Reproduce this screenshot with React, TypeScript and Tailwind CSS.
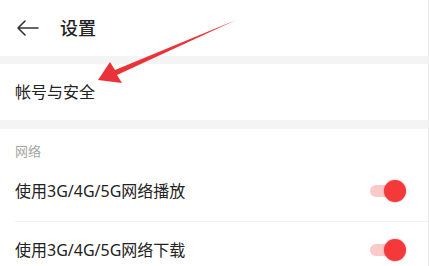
const font = { fontFamily: '"Noto Sans", "Noto Sans CJK SC", sans-serif' };

function Toggle() {
  return (
    <div className="relative w-[36px] h-[22px] flex items-center">
      <div className="w-[30px] h-[12px] rounded-full bg-[#fcc9c9]" />
      <div className="absolute right-0 top-0 w-[22px] h-[22px] rounded-full bg-[#f5393b] shadow-[0_0_2px_rgba(200,0,0,0.4)]" />
    </div>
  );
}

export default function App() {
  return (
    <div className="relative w-[429px] h-[266px] bg-white overflow-hidden border-r border-[#ececec]" style={font}>
      {/* HEADER */}
      <div className="h-[56px] flex items-center">
        <svg className="ml-[16px]" width="24" height="18" viewBox="0 0 24 18" fill="none" stroke="#333" strokeWidth="1.6" strokeLinecap="round" strokeLinejoin="round">
          <path d="M2 9h20M9 2L2 9l7 7" />
        </svg>
        <span className="ml-[20px] text-[18px] font-medium text-[#222]">设置</span>
      </div>

      <div className="h-[8px] bg-[#f4f4f4]" />

      <div className="h-[56px] flex items-center pl-[15px] text-[16px] text-[#222]">帐号与安全</div>

      <div className="h-[9px] bg-[#f4f4f4]" />

      {/* NETWORK */}
      <div className="pt-[13px] pl-[15px] text-[13px] text-[#a5a5a5] leading-[18px]">网络</div>

      <div className="pl-[15px]">
        <div className="h-[61px] flex items-center justify-between pr-[22px] border-b border-[#f0f0f0] mt-[1px]">
          <span className="text-[16px] text-[#222]">使用3G/4G/5G网络播放</span>
          <Toggle />
        </div>
        <div className="h-[55px] flex items-center justify-between pr-[22px]">
          <span className="text-[16px] text-[#222]">使用3G/4G/5G网络下载</span>
          <Toggle />
        </div>
      </div>

      {/* annotation arrow */}
      <svg className="absolute inset-0 pointer-events-none" width="429" height="266" viewBox="0 0 429 266">
        <polygon points="98,80 110,62 115,70 236,20 117,75 122,83" fill="#ea3338" />
      </svg>
    </div>
  );
}
